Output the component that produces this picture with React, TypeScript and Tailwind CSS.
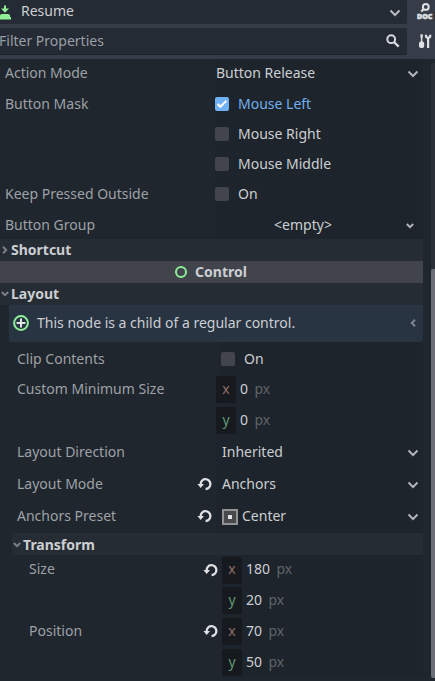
import React from 'react';

const Chevron = ({ className = '' }: { className?: string }) => (
  <svg width="12" height="8" viewBox="0 0 12 8" fill="none" className={`shrink-0 ${className}`}>
    <path d="M1.5 1.5L6 6L10.5 1.5" stroke="currentColor" strokeWidth="2" />
  </svg>
);

const SmallChevron = ({ className = '' }: { className?: string }) => (
  <svg width="8" height="6" viewBox="0 0 8 6" fill="none" className={`shrink-0 ${className}`}>
    <path d="M0.8 1L4 4.2L7.2 1" stroke="currentColor" strokeWidth="2" />
  </svg>
);

const RevertIcon = () => (
  <svg width="15" height="14" viewBox="0 0 15 14" fill="none" className="mb-px shrink-0">
    <path d="M3.6 7.5A4.9 4.9 0 1 1 8.6 12" stroke="#dfe1e4" strokeWidth="2.3" />
    <path d="M0.4 7H7L3.7 10.9Z" fill="#dfe1e4" />
  </svg>
);

const ButtonNodeIcon = () => (
  <svg width="13" height="15" viewBox="0 0 13 15" className="shrink-0">
    <path
      fill="#8eef97"
      d="M4 0.5H6V3.5H9L5 7.8L1 3.5H4ZM2 9H8A2 2 0 0 1 10 11.5V12H11V14.5H-1V12H0V11.5A2 2 0 0 1 2 9Z"
    />
  </svg>
);

const DocIcon = () => (
  <div className="flex w-4 flex-col">
    <svg width="16" height="10" viewBox="0 0 16 10" fill="none" stroke="#dfe1e4" className="shrink-0">
      <circle cx="8.8" cy="3.9" r="2.9" strokeWidth="2" />
      <path d="M6.7 6L4.2 8.5" strokeWidth="2.2" />
    </svg>
    <span className="text-[7px] leading-[7px] font-black text-[#dfe1e4] [-webkit-text-stroke:0.6px_#dfe1e4]">
      DOC
    </span>
  </div>
);

const ToolsIcon = () => (
  <svg width="14" height="15" viewBox="0 0 14 15" fill="none" className="shrink-0">
    <path d="M2.6 0.5V8" stroke="#dfe1e4" strokeWidth="1.6" />
    <path d="M1.5 0.5H3.7V3L3.2 4H2L1.5 3Z" fill="#dfe1e4" />
    <rect x="0" y="7.4" width="5.2" height="6.6" rx="2" fill="#dfe1e4" />
    <path d="M7 0.8V2.6A2.4 2.4 0 0 0 11.2 2.6V0.8M9.1 4.5V14" stroke="#dfe1e4" strokeWidth="2.2" />
  </svg>
);

const SearchIcon = () => (
  <svg width="14" height="14" viewBox="0 0 14 14" fill="none" stroke="#d5d8dd" className="shrink-0">
    <circle cx="5.2" cy="5.2" r="3.9" strokeWidth="2" />
    <path d="M8 8L12.7 12.7" strokeWidth="2.4" />
  </svg>
);

const CheckBox = ({ checked = false }: { checked?: boolean }) => (
  <span
    className={`flex h-3.5 w-3.5 shrink-0 items-center justify-center rounded-[2px] ${
      checked ? 'bg-[#6fb1f2]' : 'bg-[#42464c]'
    }`}
  >
    {checked && (
      <svg width="12" height="10" viewBox="0 0 12 10" fill="none">
        <path d="M1.6 5L4.4 7.8L10.3 1.9" stroke="#fff" strokeWidth="2" />
      </svg>
    )}
  </span>
);

interface RowProps {
  label?: string;
  height?: string;
  indent?: string;
  column?: string;
  labelPad?: string;
  revert?: boolean;
  children: React.ReactNode;
}

const Row = ({
  label,
  height = 'h-[30px]',
  indent = 'pl-[5px]',
  column = 'w-[216px]',
  labelPad = 'pb-[2px]',
  revert = false,
  children,
}: RowProps) => (
  <div className={`flex shrink-0 items-center ${height}`}>
    <div className={`flex shrink-0 items-center justify-between pr-1 ${indent} ${column}`}>
      <span className={`text-[#9da1a7] ${labelPad}`}>{label}</span>
      {revert && <RevertIcon />}
    </div>
    <div className="flex h-full flex-1 items-center bg-[#1e242b]">{children}</div>
  </div>
);

const CheckValue = ({ text, checked = false }: { text: string; checked?: boolean }) => (
  <div className="flex items-center gap-[9px]">
    <CheckBox checked={checked} />
    <span className={checked ? 'text-[#70aeea]' : ''}>{text}</span>
  </div>
);

const SelectValue = ({ text, icon }: { text: string; icon?: React.ReactNode }) => (
  <div className="flex flex-1 items-center pr-1">
    {icon}
    <span className="flex-1 pb-[2px]">{text}</span>
    <Chevron className="text-[#b0b4b9]" />
  </div>
);

const AxisValue = ({ axis, value }: { axis: 'x' | 'y'; value: string }) => (
  <div className="flex items-center">
    <span
      className={`flex h-[27px] w-5 items-center justify-center rounded-[2px] bg-[#16191e] pb-[2px] ${
        axis === 'x' ? 'text-[#916e68]' : 'text-[#5f9674]'
      }`}
    >
      {axis}
    </span>
    <span className="ml-1 pb-[2px]">{value}</span>
    <span className="ml-[6.5px] pb-[2px] text-[#5e6369]">px</span>
  </div>
);

const CenterPresetIcon = () => (
  <span className="mr-1 flex h-4 w-4 shrink-0 items-center justify-center border-2 border-[#929292] bg-[#48494b]">
    <span className="h-1 w-1 bg-[#e4e4e4]" />
  </span>
);

const Toolbar = () => (
  <div className="flex h-[59px] shrink-0 bg-[#363c48]">
    <div className="flex w-[407px] flex-col gap-1">
      <div className="flex h-6 items-center rounded-br-[2px] bg-[#252b34] pr-[6px]">
        <ButtonNodeIcon />
        <span className="ml-2 flex-1 pb-[3px]">Resume</span>
        <Chevron className="mt-px text-[#b8bcc1]" />
      </div>
      <div className="flex h-[27px] items-center rounded-r-[2px] border-b border-[#1e232b] bg-[#252b34] pr-[7px]">
        <span className="-ml-px flex-1 text-[#9a9ea6]">Filter Properties</span>
        <SearchIcon />
      </div>
    </div>
    <div className="flex flex-1 flex-col overflow-hidden pt-[3px] pl-[10px]">
      <DocIcon />
      <div className="mt-[14px] pl-[2px]">
        <ToolsIcon />
      </div>
    </div>
  </div>
);

const check = { column: 'w-[215px]', labelPad: 'pb-0' };
const nested = { indent: 'pl-[17px]' };
const transform = { indent: 'pl-[29px]', column: 'w-[222px]' };

export default function App() {
  return (
    <div className="flex h-[681px] w-[435px] flex-col overflow-hidden bg-[#20262d] font-['Noto_Sans',sans-serif] text-[14px] leading-5 whitespace-pre text-[#cbced2]">
      <Toolbar />
      <div className="flex min-h-0 flex-1">
        <div className="flex w-[423px] flex-col">
          <Row label="Action Mode" height="h-[29px]">
            <SelectValue text="Button Release" />
          </Row>
          <Row label="Button Mask" height="h-[31px]" {...check}>
            <CheckValue text="Mouse Left" checked />
          </Row>
          <Row {...check}>
            <CheckValue text="Mouse Right" />
          </Row>
          <Row {...check}>
            <CheckValue text="Mouse Middle" />
          </Row>
          <Row label="Keep Pressed Outside" {...check}>
            <CheckValue text="On" />
          </Row>
          <Row label="Button Group" height="h-[31px]" labelPad="pb-0">
            <div className="flex flex-1 items-center pr-[9px]">
              <span className="flex-1 text-center">{'<empty>'}</span>
              <SmallChevron className="mt-[3px] ml-4 text-[#b0b4b9]" />
            </div>
          </Row>

          <div className="-mt-px flex h-[22px] shrink-0 items-center bg-[#262c33] pl-[1px] font-bold">
            <SmallChevron className="-rotate-90 text-[#7c8086]" />
            <span className="ml-[2px]">Shortcut</span>
          </div>
          <div className="flex h-[22px] shrink-0 items-center justify-center gap-2 bg-[#41444b] pr-px font-bold">
            <span className="h-3 w-3 rounded-full border-2 border-[#8eef97]" />
            <span>Control</span>
          </div>
          <div className="flex h-[22px] shrink-0 items-center bg-[#262c33] pl-[1px] font-bold">
            <SmallChevron className="text-[#7c8086]" />
            <span className="ml-[2px]">Layout</span>
          </div>

          <div className="ml-[9px] flex h-[37px] shrink-0 items-center rounded-b-[3px] bg-[#293442] pr-[6px] pb-px pl-1">
            <svg width="16" height="16" viewBox="0 0 16 16" fill="none" className="shrink-0">
              <circle cx="8" cy="8" r="6.9" stroke="#8eef97" strokeWidth="2" />
              <path d="M8 3.6V12.4M3.6 8H12.4" stroke="#e0e5e5" strokeWidth="2" />
            </svg>
            <span className="ml-2 flex-1 pb-px">This node is a child of a regular control.</span>
            <SmallChevron className="rotate-90 text-[#7c8591]" />
          </div>

          <Row label="Clip Contents" height="h-[33px]" {...nested} column="w-[221px]" labelPad="pb-0">
            <CheckValue text="On" />
          </Row>
          <Row label="Custom Minimum Size" height="h-[29px]" {...nested}>
            <AxisValue axis="x" value="0" />
          </Row>
          <Row height="h-[33px]" {...nested}>
            <AxisValue axis="y" value="0" />
          </Row>
          <Row label="Layout Direction" height="h-[32px]" {...nested}>
            <div className="flex flex-1 pl-[6px]">
              <SelectValue text="Inherited" />
            </div>
          </Row>
          <Row label="Layout Mode" height="h-[31px]" {...nested} revert>
            <div className="flex flex-1 pl-[6px]">
              <SelectValue text="Anchors" />
            </div>
          </Row>
          <Row label="Anchors Preset" height="h-[33px]" {...nested} revert>
            <div className="flex flex-1 pl-[6px]">
              <SelectValue text="Center" icon={<CenterPresetIcon />} />
            </div>
          </Row>

          <div className="ml-3 flex h-[22px] shrink-0 items-center bg-[#262c33] pt-[2px] pl-[1px] font-bold">
            <SmallChevron className="text-[#7c8086]" />
            <span className="ml-[2px]">Transform</span>
          </div>

          <Row label="Size" {...transform} revert>
            <AxisValue axis="x" value="180" />
          </Row>
          <Row height="h-[31px]" {...transform}>
            <AxisValue axis="y" value="20" />
          </Row>
          <Row label="Position" height="h-[31px]" {...transform} revert>
            <AxisValue axis="x" value="70" />
          </Row>
          <Row height="h-[31px]" {...transform}>
            <AxisValue axis="y" value="50" />
          </Row>
        </div>

        <div className="mt-1 mb-[3px] ml-2 flex-1 rounded-tl-[2px] bg-[#2b3037] pt-[206px]">
          <div className="h-full rounded-l-[2px] bg-[#6b6e75]" />
        </div>
      </div>
    </div>
  );
}
